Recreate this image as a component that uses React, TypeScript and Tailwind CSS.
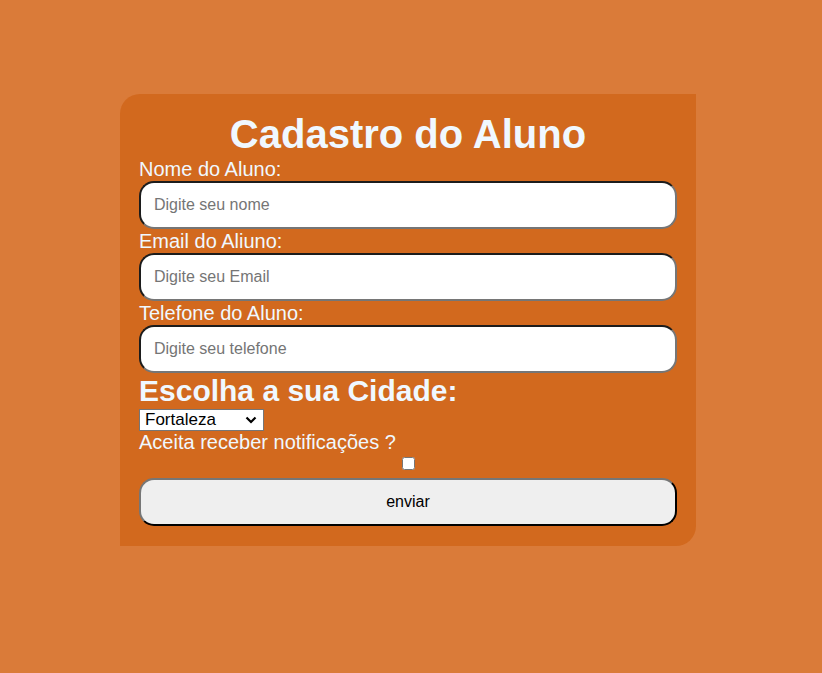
import { useState } from 'react';

const CIDADES = ['Fortaleza', 'Caucaia', 'Maracanaú', 'Sobral', 'Juazeiro do Norte'];

function Campo({ label, placeholder, type = 'text' }: { label: string; placeholder: string; type?: string }) {
  return (
    <>
      <label className="block text-[20px] leading-[24px]">{label}</label>
      <input
        type={type}
        placeholder={placeholder}
        className="block w-full h-[48px] bg-white rounded-[15px] border-2 border-t-[#1c1c1c] border-l-[#1c1c1c] border-b-[#767676] border-r-[#767676] pl-[13px] text-[16px] text-black placeholder:text-[#757575] outline-none"
      />
    </>
  );
}

export default function App() {
  const [cidade, setCidade] = useState('Fortaleza');
  const [aceita, setAceita] = useState(false);

  return (
    <div
      className="min-h-screen w-full bg-[#da7b39] pt-[94px] pb-[127px]"
      style={{ fontFamily: '"Liberation Sans", Arial, sans-serif' }}
    >
      {/* Card do formulario */}
      <form
        onSubmit={e => e.preventDefault()}
        className="ml-[120px] w-[576px] bg-[#d2691e] rounded-tl-[20px] rounded-br-[20px] px-[19px] pt-[17px] pb-[20px] text-[#f0f8ff]"
      >
        <h1 className="text-center text-[40px] leading-[46px] font-bold">Cadastro do Aluno</h1>

        <Campo label="Nome do Aluno:" placeholder="Digite seu nome" />
        <Campo label="Email do Aliuno:" placeholder="Digite seu Email" type="email" />
        <Campo label="Telefone do Aluno:" placeholder="Digite seu telefone" type="tel" />

        <h2 className="text-[30px] leading-[35px] font-bold">Escolha a sua Cidade:</h2>
        <div className="relative mt-[1px] w-[125px] h-[22px]">
          <select
            value={cidade}
            onChange={e => setCidade(e.target.value)}
            className="appearance-none block w-full h-full bg-white text-black text-[17px] leading-[20px] border border-[#767676] pl-[5px] pr-[20px] outline-none"
          >
            {CIDADES.map(c => (
              <option key={c} value={c}>{c}</option>
            ))}
          </select>
          <svg
            className="absolute right-[7px] top-[7px] pointer-events-none"
            width="12"
            height="8"
            viewBox="0 0 12 8"
            fill="none"
          >
            <path d="M1.5 1.5 L6 6 L10.5 1.5" stroke="black" strokeWidth="2.2" />
          </svg>
        </div>

        <p className="text-[20px] leading-[23px]">Aceita receber notificações ?</p>
        <div className="flex justify-center pt-[3px]">
          <input
            type="checkbox"
            checked={aceita}
            onChange={e => setAceita(e.target.checked)}
            className="w-[13px] h-[13px] m-0"
          />
        </div>

        <button
          type="submit"
          className="mt-[8px] block w-full h-[48px] bg-[#efefef] text-black text-[16px] rounded-[15px] border-2 border-t-[#767676] border-l-[#767676] border-b-black border-r-black"
        >
          enviar
        </button>
      </form>
    </div>
  );
}
